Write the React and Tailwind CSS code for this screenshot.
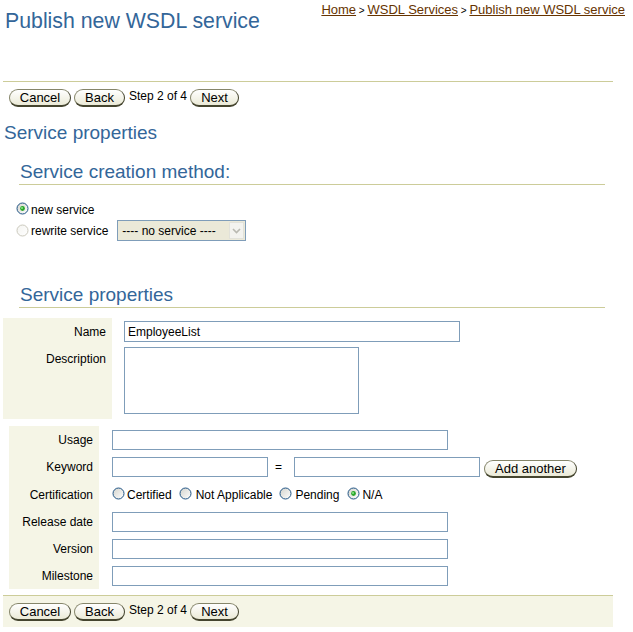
import React from "react";

const Radio = ({ id, checked, disabled }) => (
  <svg width="13" height="13" viewBox="0 0 13 13" className="shrink-0">
    <defs>
      <linearGradient id={`rg-${id}`} x1="0" y1="0" x2="1" y2="1">
        <stop offset="0" stopColor={disabled ? "#f4f4f0" : "#d3d3cc"} />
        <stop offset="1" stopColor="#ffffff" />
      </linearGradient>
    </defs>
    <circle cx="6.5" cy="6.5" r="5.5" fill={`url(#rg-${id})`} stroke={disabled ? "#cbc9bd" : "#1f5485"} />
    {checked && <circle cx="6.5" cy="6.5" r="2.4" fill="#2aa52a" />}
    {checked && <circle cx="6" cy="6" r="1" fill="#8ae88a" />}
  </svg>
);

const Btn = ({ children, cls }) => (
  <button
    type="button"
    className={`${cls} h-[18px] shrink-0 rounded-full border border-[#85856a] border-r-[#45452f] border-b-2 border-b-[#45452f] bg-linear-to-b from-white to-[#ebead7] text-[13px] leading-none text-black flex items-center justify-center`}
  >
    {children}
  </button>
);

const StepBar = () => (
  <div className="flex items-start">
    <Btn cls="w-[62px]">Cancel</Btn>
    <Btn cls="w-[51px] ml-[3px]">Back</Btn>
    <span className="ml-[4px] text-[12px] leading-[14px] text-black">Step 2 of 4</span>
    <Btn cls="w-[49px] ml-[3px]">Next</Btn>
  </div>
);

const Field = ({ cls, value }) => (
  <input
    type="text"
    defaultValue={value}
    className={`${cls} h-[20px] border border-[#7f9db9] bg-white px-[3px] text-[12px] text-black outline-none`}
  />
);

const Label = ({ children, cls }) => (
  <div className={`${cls} bg-[#f5f5e6] pr-[6px] flex justify-end text-[12px] leading-[15px] text-black`}>
    {children}
  </div>
);

const App = () => {
  return (
    <div className="w-[633px] h-[632px] bg-white overflow-hidden font-['Liberation_Sans',Arial,sans-serif] text-black">
      {/* header */}
      <div className="h-[81px] flex justify-between">
        <h1 className="pl-[5px] pt-[8px] text-[21.3px] leading-[26px] text-[#336699]">
          Publish new WSDL service
        </h1>
        <div className="pr-[8px] pt-[2px] text-[13px] leading-[15px] text-[#663300]">
          <a href="#" className="underline">Home</a>
          <span className="text-[10px] text-black"> &gt; </span>
          <a href="#" className="underline">WSDL Services</a>
          <span className="text-[10px] text-black"> &gt; </span>
          <a href="#" className="underline">Publish new WSDL service</a>
        </div>
      </div>
      <div className="ml-[3px] w-[610px] h-px bg-[#cccc99]" />

      <div className="mt-[7px] pl-[9px]">
        <StepBar />
      </div>

      <h2 className="mt-[15px] pl-[4px] text-[19px] leading-[22px] text-[#336699]">Service properties</h2>

      {/* creation method */}
      <h3 className="mt-[17px] ml-[19px] w-[586px] pl-[1px] pb-[1px] border-b border-[#cccc99] text-[19px] leading-[22px] text-[#336699]">
        Service creation method:
      </h3>
      <div className="mt-[17px] pl-[16px] text-[12px] leading-[16px]">
        <div className="h-[16px] flex items-center">
          <span className="mb-[3px]"><Radio id="new" checked /></span>
          <span className="ml-[2px]">new service</span>
        </div>
        <div className="mt-[2px] h-[21px] flex items-center">
          <span className="mb-[1px]"><Radio id="rw" disabled /></span>
          <span className="ml-[2px]">rewrite service</span>
          <div className="ml-[9px] w-[129px] h-[21px] border border-[#7f9db9] bg-[#ebe9d8] flex items-center justify-between">
            <span className="pl-[4px]">---- no service ----</span>
            <span className="mr-px w-[15px] h-[17px] border border-[#e2e2da] bg-[#f3f3ef] flex items-center justify-center">
              <svg width="9" height="6" viewBox="0 0 9 6">
                <path d="M1 1l3.5 3.5L8 1" fill="none" stroke="#b9b9b1" strokeWidth="1.6" />
              </svg>
            </span>
          </div>
        </div>
      </div>

      {/* service properties */}
      <h3 className="mt-[43px] ml-[19px] w-[586px] pl-[1px] pb-[1px] border-b border-[#cccc99] text-[19px] leading-[22px] text-[#336699]">
        Service properties
      </h3>

      <div className="mt-[10px] ml-[3px] grid grid-cols-[109px_1fr]">
        <Label cls="h-[27px] pt-[2px] items-center">Name</Label>
        <div className="pl-[12px] h-[27px] flex items-center">
          <Field cls="w-[336px] h-[21px]" value="EmployeeList" />
        </div>
        <Label cls="pt-[7px] pb-[5px] items-start">Description</Label>
        <div className="pl-[12px] pt-[2px] pb-[5px]">
          <textarea className="block w-[235px] h-[67px] border border-[#7f9db9] bg-white resize-none outline-none" />
        </div>
      </div>

      <div className="mt-[7px] ml-[9px] grid grid-cols-[90px_1fr]">
        <Label cls="h-[27px] pt-[2px] items-center">Usage</Label>
        <div className="pl-[13px] h-[27px] flex items-center">
          <Field cls="w-[336px]" />
        </div>

        <Label cls="h-[27px] pt-[2px] items-center">Keyword</Label>
        <div className="pl-[13px] h-[27px] flex items-center">
          <Field cls="w-[156px]" />
          <span className="ml-[7px] w-[7px] text-[12px]">=</span>
          <Field cls="ml-[12px] w-[186px]" />
          <div className="ml-[4px] mt-[4px]">
            <Btn cls="w-[93px]">Add another</Btn>
          </div>
        </div>

        <Label cls="h-[28px] pt-[2px] items-center">Certification</Label>
        <div className="pl-[13px] pt-[2px] h-[28px] flex items-center text-[12px]">
          <span className="mb-[3px]"><Radio id="c1" /></span>
          <span className="ml-[2px]">Certified</span>
          <span className="ml-[7px] mb-[3px]"><Radio id="c2" /></span>
          <span className="ml-[4px]">Not Applicable</span>
          <span className="ml-[7px] mb-[3px]"><Radio id="c3" /></span>
          <span className="ml-[3px]">Pending</span>
          <span className="ml-[8px] mb-[3px]"><Radio id="c4" checked /></span>
          <span className="ml-[2px]">N/A</span>
        </div>

        <Label cls="h-[27px] pt-[2px] items-center">Release date</Label>
        <div className="pl-[13px] h-[27px] flex items-center">
          <Field cls="w-[336px]" />
        </div>

        <Label cls="h-[27px] pt-[2px] items-center">Version</Label>
        <div className="pl-[13px] h-[27px] flex items-center">
          <Field cls="w-[336px]" />
        </div>

        <Label cls="h-[27px] pt-[2px] items-center">Milestone</Label>
        <div className="pl-[13px] h-[27px] flex items-center">
          <Field cls="w-[336px]" />
        </div>
      </div>

      {/* bottom bar */}
      <div className="mt-[6px] ml-[3px] w-[610px] border-t border-[#cccc99] bg-[#f5f5e6] pt-[7px] pb-[6px] pl-[6px]">
        <StepBar />
      </div>
    </div>
  );
};

export default App;
